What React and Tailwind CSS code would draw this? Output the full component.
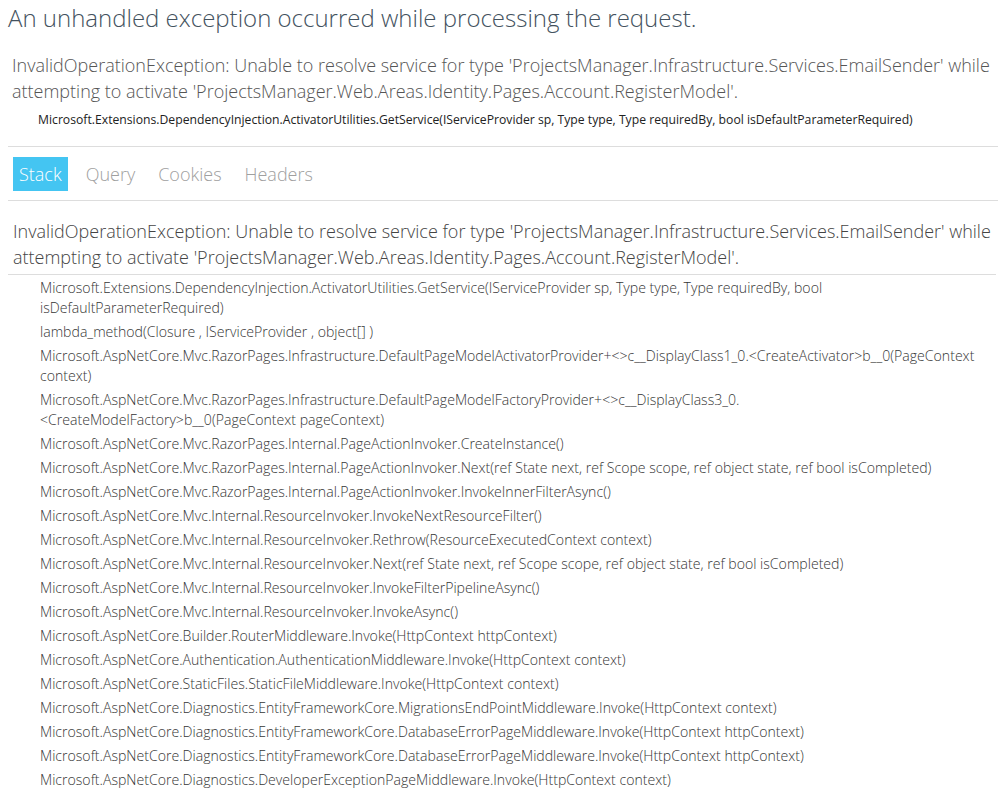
import React, { useState } from 'react';

const FRAMES = [
  ['Microsoft.Extensions.DependencyInjection.ActivatorUtilities.GetService(IServiceProvider sp, Type type, Type requiredBy, bool', 'isDefaultParameterRequired)'],
  ['lambda_method(Closure , IServiceProvider , object[] )'],
  ['Microsoft.AspNetCore.Mvc.RazorPages.Infrastructure.DefaultPageModelActivatorProvider+<>c__DisplayClass1_0.<CreateActivator>b__0(PageContext', 'context)'],
  ['Microsoft.AspNetCore.Mvc.RazorPages.Infrastructure.DefaultPageModelFactoryProvider+<>c__DisplayClass3_0.', '<CreateModelFactory>b__0(PageContext pageContext)'],
  ['Microsoft.AspNetCore.Mvc.RazorPages.Internal.PageActionInvoker.CreateInstance()'],
  ['Microsoft.AspNetCore.Mvc.RazorPages.Internal.PageActionInvoker.Next(ref State next, ref Scope scope, ref object state, ref bool isCompleted)'],
  ['Microsoft.AspNetCore.Mvc.RazorPages.Internal.PageActionInvoker.InvokeInnerFilterAsync()'],
  ['Microsoft.AspNetCore.Mvc.Internal.ResourceInvoker.InvokeNextResourceFilter()'],
  ['Microsoft.AspNetCore.Mvc.Internal.ResourceInvoker.Rethrow(ResourceExecutedContext context)'],
  ['Microsoft.AspNetCore.Mvc.Internal.ResourceInvoker.Next(ref State next, ref Scope scope, ref object state, ref bool isCompleted)'],
  ['Microsoft.AspNetCore.Mvc.Internal.ResourceInvoker.InvokeFilterPipelineAsync()'],
  ['Microsoft.AspNetCore.Mvc.Internal.ResourceInvoker.InvokeAsync()'],
  ['Microsoft.AspNetCore.Builder.RouterMiddleware.Invoke(HttpContext httpContext)'],
  ['Microsoft.AspNetCore.Authentication.AuthenticationMiddleware.Invoke(HttpContext context)'],
  ['Microsoft.AspNetCore.StaticFiles.StaticFileMiddleware.Invoke(HttpContext context)'],
  ['Microsoft.AspNetCore.Diagnostics.EntityFrameworkCore.MigrationsEndPointMiddleware.Invoke(HttpContext context)'],
  ['Microsoft.AspNetCore.Diagnostics.EntityFrameworkCore.DatabaseErrorPageMiddleware.Invoke(HttpContext httpContext)'],
  ['Microsoft.AspNetCore.Diagnostics.EntityFrameworkCore.DatabaseErrorPageMiddleware.Invoke(HttpContext httpContext)'],
  ['Microsoft.AspNetCore.Diagnostics.DeveloperExceptionPageMiddleware.Invoke(HttpContext context)'],
];

const TABS = ['Stack', 'Query', 'Cookies', 'Headers'];

export default function App() {
  const [tab, setTab] = useState('Stack');

  return (
    <div className="min-h-[808px] bg-white px-2 text-[#222] font-['Open_Sans','Liberation_Sans',sans-serif] overflow-hidden">
      <h1 className="pt-[2px] text-[24px] leading-[32px] font-light text-[#44525e] whitespace-nowrap">
        An unhandled exception occurred while processing the request.
      </h1>

      <div className="mt-[18px] pl-[4px] text-[18px] leading-[26px] font-light text-[#555]">
        <div className="whitespace-nowrap">InvalidOperationException: Unable to resolve service for type 'ProjectsManager.Infrastructure.Services.EmailSender' while</div>
        <div className="whitespace-nowrap">attempting to activate 'ProjectsManager.Web.Areas.Identity.Pages.Account.RegisterModel'.</div>
      </div>
      <div className="mt-[7px] ml-[30px] text-[12.2px] leading-[18px] whitespace-nowrap">
        Microsoft.Extensions.DependencyInjection.ActivatorUtilities.GetService(IServiceProvider sp, Type type, Type requiredBy, bool isDefaultParameterRequired)
      </div>

      <ul className="mt-[17px] flex h-[55px] items-center gap-[13px] border-y border-[#ddd] pl-[5px] text-[18px] font-light">
        {TABS.map(t => (
          <li
            key={t}
            onClick={() => setTab(t)}
            className={t === tab ? 'cursor-pointer bg-[#44c5f2] px-[6px] leading-[34px] text-white' : 'cursor-pointer px-[5px] leading-[34px] text-[#a0a0a0]'}
          >
            {t}
          </li>
        ))}
      </ul>

      <div className="mr-[2px] border-b border-[#ddd] px-[5px] pt-[17px] pb-[4px] text-[18px] leading-[26px] font-light text-[#444]">
        <div className="whitespace-nowrap">InvalidOperationException: Unable to resolve service for type 'ProjectsManager.Infrastructure.Services.EmailSender' while</div>
        <div className="whitespace-nowrap">attempting to activate 'ProjectsManager.Web.Areas.Identity.Pages.Account.RegisterModel'.</div>
      </div>

      <ul className="pt-px">
        {FRAMES.map((lines, i) => (
          <li key={i} className="ml-[30px] p-[2px] text-[14.1px] leading-[20px] font-light text-[#363636]">
            {lines.map((l, j) => (
              <div key={j} className="whitespace-nowrap">{l}</div>
            ))}
          </li>
        ))}
      </ul>
    </div>
  );
}
